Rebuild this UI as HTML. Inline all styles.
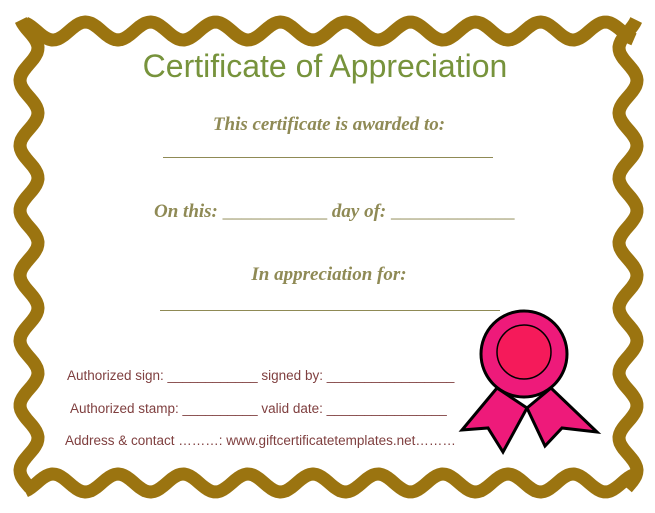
<!DOCTYPE html>
<html><head><meta charset="utf-8"><style>
html,body{margin:0;padding:0;background:#fff}
body{width:655px;height:513px;position:relative;overflow:hidden;font-family:"Liberation Sans",sans-serif}
svg{position:absolute;left:0;top:0}
.t{position:absolute;white-space:nowrap}
.g{color:#8f8a55;font-family:"Liberation Serif",serif;font-style:italic;font-weight:bold;font-size:19px}
.b{color:#7f3f3f;font-size:13.5px}
</style></head><body>
<svg width="655" height="513" id="s">
<g id="w" fill="none" stroke="#9b7410" stroke-width="13" stroke-linejoin="round"></g>
<g fill="#ee1a7a" stroke="#000" stroke-width="3" stroke-linejoin="miter">
<path d="M497 388 L462 430 L488 428 L503 452 L527 408 Z"/>
<path d="M551 388 L527 408 L545 446 L562 428 L597 432 Z"/>
<circle cx="524" cy="354" r="43"/>
<circle cx="524" cy="352" r="27" fill="#f51a5a" stroke-width="1.5"/>
</g>
</svg>
<script>
(function(){
 var g=document.getElementById('w'),P=65,A=9,d='';
 function side(fn,len){var s='';for(var i=0;i<=len;i+=3){var p=fn(i);s+=(i?'L':'M')+p[0].toFixed(1)+' '+p[1].toFixed(1);}return s;}
 function w(t){return A*Math.cos(2*Math.PI*t/P);}
 d+=side(function(i){return [25+i,31+w(i-28)];},610);
 d+=side(function(i){return [628-w(i-28),20+i];},470);
 d+=side(function(i){return [25+i,483-w(i-28)];},610);
 d+=side(function(i){return [29+w(i-28),20+i];},470);
 var p=document.createElementNS('http://www.w3.org/2000/svg','path');p.setAttribute('d',d);g.appendChild(p);
})();
</script>
<div class="t" style="left:0;width:650px;text-align:center;top:48px;font-size:32px;color:#77933c">Certificate of Appreciation</div>
<div class="t g" style="left:0;width:658px;text-align:center;top:114px">This certificate is awarded to:</div>
<div class="t" style="left:163px;top:145px;width:330px;border-bottom:1px solid #8f8a55;height:12px"></div>
<div class="t g" style="left:154px;top:201px">On this: <span style="font-weight:normal;font-style:normal">___________</span> day of: <span style="font-weight:normal;font-style:normal">_____________</span></div>
<div class="t g" style="left:0;width:658px;text-align:center;top:264px">In appreciation for:</div>
<div class="t" style="left:160px;top:298px;width:340px;border-bottom:1px solid #8f8a55;height:12px"></div>
<div class="t b" style="left:67px;top:368px">Authorized sign: ____________ signed by: _________________</div>
<div class="t b" style="left:70px;top:401px">Authorized stamp: __________ valid date: ________________</div>
<div class="t b" style="left:65px;top:433px">Address &amp; contact ………: www.giftcertificatetemplates.net………</div>
</body></html>
